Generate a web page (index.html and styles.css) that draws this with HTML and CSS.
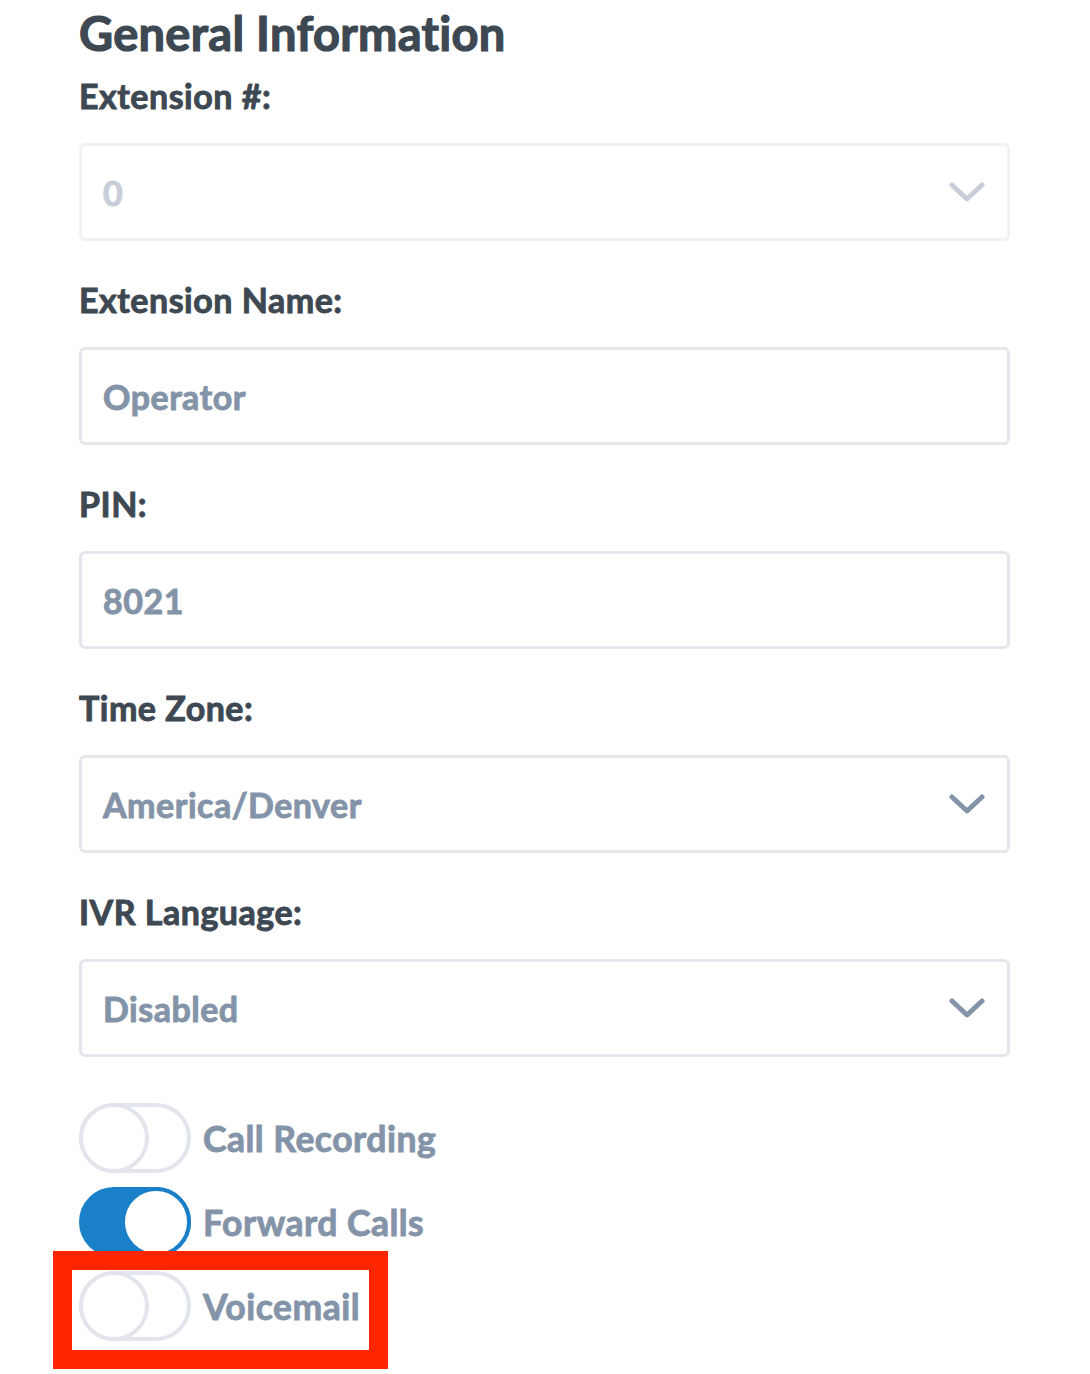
FILE: index.html
```
<!DOCTYPE html>
<html lang="en">
<head>
    <meta charset="UTF-8">
    <meta name="viewport" content="width=device-width, initial-scale=1.0">
    <title>Extension - General Information</title>
    <link rel="stylesheet" href="styles.css">
</head>
<body>
    <div class="container">
        <h1>General Information</h1>

        <div class="field">
            <label>Extension #:</label>
            <div class="input select disabled">
                <span>0</span>
                <svg class="chevron" viewBox="0 0 36 20"><path d="M3 3 L18 17 L33 3"/></svg>
            </div>
        </div>

        <div class="field">
            <label>Extension Name:</label>
            <div class="input"><span>Operator</span></div>
        </div>

        <div class="field">
            <label>PIN:</label>
            <div class="input"><span>8021</span></div>
        </div>

        <div class="field">
            <label>Time Zone:</label>
            <div class="input select">
                <span>America/Denver</span>
                <svg class="chevron" viewBox="0 0 36 20"><path d="M3 3 L18 17 L33 3"/></svg>
            </div>
        </div>

        <div class="field">
            <label>IVR Language:</label>
            <div class="input select">
                <span>Disabled</span>
                <svg class="chevron" viewBox="0 0 36 20"><path d="M3 3 L18 17 L33 3"/></svg>
            </div>
        </div>

        <div class="toggles">
            <div class="toggle-row">
                <div class="toggle"><div class="knob"></div></div>
                <span class="toggle-label">Call Recording</span>
            </div>
            <div class="toggle-row">
                <div class="toggle on"><div class="knob"></div></div>
                <span class="toggle-label">Forward Calls</span>
            </div>
            <div class="toggle-row highlighted">
                <div class="toggle"><div class="knob"></div></div>
                <span class="toggle-label">Voicemail</span>
            </div>
        </div>
    </div>
</body>
</html>
```

FILE: styles.css
```
* {
    margin: 0;
    padding: 0;
    box-sizing: border-box;
}

body {
    font-family: Lato, "Open Sans", sans-serif;
    font-weight: 700;
    -webkit-text-stroke: 0.9px currentColor;
    letter-spacing: 0.5px;
    background: #ffffff;
    color: #3d4852;
    width: 1090px;
    height: 1374px;
    overflow: hidden;
}

.container {
    padding: 5px 80px 0 79px;
}

h1 {
    font-size: 47px;
    line-height: 56px;
    font-weight: 700;
    letter-spacing: 0.3px;
    -webkit-text-stroke: 1.2px currentColor;
    color: #3d4852;
    margin-bottom: 14px;
}

.field {
    margin-bottom: 38px;
}

.field label {
    display: block;
    font-size: 34px;
    line-height: 42px;
    margin-bottom: 26px;
    color: #3d4852;
}

.input {
    height: 98px;
    width: 931px;
    border: 3px solid #e4e7ec;
    border-radius: 6px;
    display: flex;
    align-items: center;
    justify-content: space-between;
    padding: 0 22px 0 21px;
    font-size: 34px;
    color: #8494a8;
}

.input.disabled {
    border-color: #f1f2f5;
    color: #c7ced9;
}

.chevron {
    width: 36px;
    height: 20px;
    fill: none;
    stroke: #8494a8;
    stroke-width: 5;
    stroke-linecap: round;
    stroke-linejoin: round;
}

.disabled .chevron {
    stroke: #c7ced9;
}

.toggles {
    margin-top: 46px;
    display: flex;
    flex-direction: column;
    gap: 14px;
}

.toggle-row {
    display: flex;
    align-items: center;
    gap: 12px;
    position: relative;
}

.toggle {
    width: 112px;
    height: 70px;
    border: 4px solid #e2e6ec;
    border-radius: 35px;
    background: #ffffff;
    position: relative;
}

.toggle .knob {
    position: absolute;
    top: -4px;
    left: -4px;
    width: 70px;
    height: 70px;
    border-radius: 50%;
    border: 4px solid #e2e6ec;
    background: #ffffff;
}

.toggle.on {
    background: #1a80c7;
    border-color: #1a80c7;
}

.toggle.on .knob {
    left: auto;
    right: -4px;
    border-color: #1a80c7;
}

.toggle-label {
    font-size: 35.5px;
    color: #8494a8;
}

.highlighted::after {
    content: "";
    box-sizing: border-box;
    position: absolute;
    left: -26px;
    top: -20px;
    width: 335px;
    height: 118px;
    border: 19px solid #ff2600;
}
```
